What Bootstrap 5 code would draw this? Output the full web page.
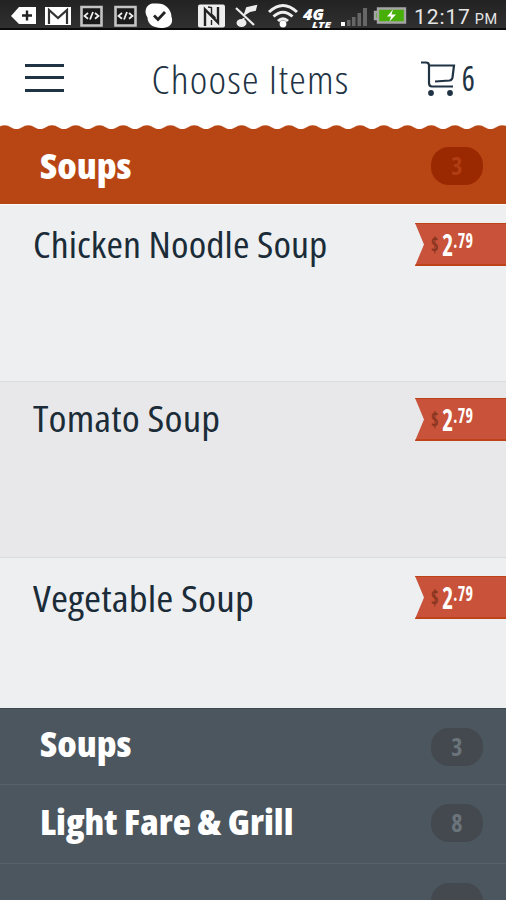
<!DOCTYPE html>
<html lang="en">
<head>
<meta charset="utf-8">
<meta name="viewport" content="width=device-width, initial-scale=1">
<title>Choose Items</title>
<link href="https://cdn.jsdelivr.net/npm/bootstrap@5.3.0/dist/css/bootstrap.min.css" rel="stylesheet">
<style>
body{font-family:"Open Sans","Noto Sans",sans-serif;font-stretch:75%;background:#4c565e;color:#1b2c38}
.screen{width:506px;height:900px;background:#4c565e}
.status-bar{height:30px;background:linear-gradient(#222,#303030);border-bottom:2px solid #0b0b0b;font-family:Roboto,sans-serif;font-stretch:100%;color:#e6e6e6}
.clock{font-size:21px;line-height:28px;letter-spacing:.9px;margin-left:4px;padding-top:3px}
.clock small{font-size:14.5px;letter-spacing:.5px;margin-left:4px}
.top-bar{height:95px;background:#fff;color:#1f3344;padding:0 31px 0 25px}
.menu-lines{width:39px;height:28px}
.menu-lines i{height:3px;background:#1f3344}
.page-title{font-size:38.5px;font-weight:350;letter-spacing:1.1px;line-height:48px;transform:scaleX(1.09);padding:2px 0 0 16px}
.cart-count{font-size:35px;line-height:40px;transform:scaleX(.88);transform-origin:right;margin-left:-2px}
.scallop{height:4px;background:#fff}
.section-bar{color:#fff;padding:0 23px 0 40px;font-size:36px;font-weight:800;line-height:44px}
.section-bar.active{height:75px;background:#b84614}
.section-bar.idle{height:79px;border-bottom:1px solid #566169}
.section-bar.first{height:77px;border-top:1px solid #3d494f}
.section-name{padding-top:15px;transform:scaleX(1.05);transform-origin:left}
.long-name{transform:scaleX(1.037)}
.first .section-name{padding-top:13px}
.count-pill{width:52px;height:38px;border-radius:18px;font-size:24px;line-height:38px;font-weight:700;background:#43494e;color:#6b747b;margin-top:19px}
.active .count-pill{background:#9a2800;color:#b03d14;margin-top:18px}
.item-list{border-top:1px solid #fafafa}
.menu-item{height:177px;background:#edeff1;border-bottom:1px solid #d9dbdd;padding-left:33px;font-size:36px;font-weight:500;line-height:42px}
.menu-item.alt{height:176px;background:#e8e8ea}
.menu-item:last-child{height:150px;border:0}
.item-name{padding-top:19px;letter-spacing:.1px;transform:scaleX(1.105);transform-origin:left}
.alt .item-name{padding-top:16px;transform:scaleX(1.137)}
.menu-item:last-child .item-name{padding-top:20px;transform:scaleX(1.143)}
.ribbon{width:91px;height:43px;margin-top:18px;background:#c9523a;border-top:1px solid #bf4318;border-bottom:2px solid #bf4318;clip-path:polygon(0 0,100% 0,100% 100%,0 100%,9px 50%);padding-left:16px;color:#fff}
.alt .ribbon{margin-top:16px}
.menu-item:last-child .ribbon{margin-top:18px}
.price{font-weight:700;font-size:31px;line-height:40px;transform:scaleX(.76);transform-origin:left;white-space:nowrap}
.price .cur{font-size:21px;color:#8a3520;margin-right:5px}
.price .cents{font-size:21px;line-height:32px;letter-spacing:.4px}
</style>
<script src="https://cdn.jsdelivr.net/npm/bootstrap@5.3.0/dist/js/bootstrap.bundle.min.js"></script>
</head>
<body>
<main class="screen overflow-hidden">
  <div class="status-bar d-flex">
    <svg width="410" height="30" viewBox="0 0 410 30" class="flex-shrink-0">
      <path d="M11 16l8-9h17v17H19z" fill="#fff"/><path d="M27 10.500v10M22 15.500h10" stroke="#222" stroke-width="2.400"/>
      <path d="M45 7h26v18H45z" fill="#fff"/><path d="M49 24V10l9 8 9-8v14" fill="none" stroke="#333" stroke-width="2.200"/>
      <g id="code"><path d="M81.500 7h20v18.500h-20z" fill="#1a1a1a" stroke="#c4c4c4" stroke-width="2.600"/><path d="M88 13l-3.500 2.900 3.500 2.900M95 13l3.500 2.900-3.500 2.900M93 12l-3 7.500" fill="none" stroke="#eee" stroke-width="1.800"/></g>
      <use href="#code" x="34"/>
      <path d="M146 9c1-4 5-6 9-5.500 5-.5 9 .5 12 3.500 3 3 4.500 6 4.500 10 2 5-1 10-6 10.500-4 1-7 .5-10-.5-5-1-8-5-8-9.500-2-3-2.500-6-1.500-8.500z" fill="#fff"/><path d="M154 15.500l4 4 7-7.500" fill="none" stroke="#222" stroke-width="2.800"/>
      <rect x="198" y="4.500" width="27" height="23" rx="2" fill="#eee"/><path d="M205 26V9.500l13 13V7" fill="none" stroke="#222" stroke-width="2.400"/><path d="M208 7l3.500.5v6.500l4 4M211.500 25v-5" fill="none" stroke="#222" stroke-width="1.400"/>
      <ellipse cx="241.500" cy="23" rx="5" ry="4" fill="#eee"/><path d="M236 8l18 17" fill="none" stroke="#eee" stroke-width="2.200"/><path d="M243.500 23V18M245 14l2-6 9-2-1 4-5 1z" fill="#eee" stroke="#eee" stroke-width="2"/>
      <path d="M269 12q14-13 28 0M273.500 16.500q9.500-8.500 19 0M278 21q5-4.500 10 0" fill="none" stroke="#eee" stroke-width="3"/><circle cx="283" cy="24" r="3.400" fill="#fff"/>
      <g fill="#fff" font-family="Open Sans, sans-serif" font-style="italic" font-weight="800"><text x="303" y="20" font-size="15" textLength="21" lengthAdjust="spacingAndGlyphs">4G</text><text x="312" y="27.500" font-size="8.500" textLength="19" lengthAdjust="spacingAndGlyphs">LTE</text></g>
      <path d="M341 22h4v4h-4z" fill="#fff"/><path d="M347 20h3.500v6H347zM352 17h3.500v9H352zM357.500 13h3.500v13h-3.500zM363 8h4v18h-4z" fill="#666"/>
      <path d="M378 8.500h27v14h-27zM378 12h-3v7h3" fill="#48ae08" stroke="#a5a5a5" stroke-width="2.400"/><path d="M393 9.500l-6 7h4l-1.500 5 6.500-7h-4.500z" fill="#fff"/>
    </svg>
    <div class="clock text-nowrap">12:17<small>PM</small></div>
  </div>

  <header class="top-bar d-flex align-items-center justify-content-between">
    <div class="menu-lines d-flex flex-column justify-content-between"><i></i><i></i><i></i></div>
    <h1 class="page-title m-0 text-nowrap">Choose Items</h1>
    <div class="d-flex align-items-center">
      <svg width="42" height="36" viewBox="0 0 42 36" fill="none" stroke="#1f3344" stroke-width="2.200"><path d="M1 2.500h5q3 0 3 3V23q0 3.500 3 3.500h21M9 5.500h25l-1.500 12q-.5 2.500-3 3L15 21.500"/><g fill="#1f3344" stroke="none"><circle cx="11" cy="33" r="2.900"/><circle cx="30" cy="33" r="2.900"/></g></svg>
      <span class="cart-count">6</span>
    </div>
  </header>

  <svg class="scallop d-block" width="506" height="4">
    <defs><pattern id="wave" x="-7.200" width="23.700" height="4" patternUnits="userSpaceOnUse"><path d="M0 4C5 4 6.500.2 11.850.2S18.700 4 23.700 4z" fill="#b84614"/></pattern></defs>
    <rect width="506" height="4" fill="url(#wave)"/>
  </svg>
  <div class="section-bar active d-flex justify-content-between">
    <span class="section-name">Soups</span><span class="count-pill text-center">3</span>
  </div>

  <section class="item-list">
    <div class="menu-item d-flex justify-content-between"><span class="item-name">Chicken Noodle Soup</span>
      <div class="ribbon"><div class="price d-flex"><span class="cur">$</span><span>2</span><span class="cents">.79</span></div></div></div>
    <div class="menu-item alt d-flex justify-content-between"><span class="item-name">Tomato Soup</span>
      <div class="ribbon"><div class="price d-flex"><span class="cur">$</span><span>2</span><span class="cents">.79</span></div></div></div>
    <div class="menu-item d-flex justify-content-between"><span class="item-name">Vegetable Soup</span>
      <div class="ribbon"><div class="price d-flex"><span class="cur">$</span><span>2</span><span class="cents">.79</span></div></div></div>
  </section>

  <div class="section-bar idle first d-flex justify-content-between"><span class="section-name">Soups</span><span class="count-pill text-center">3</span></div>
  <div class="section-bar idle d-flex justify-content-between"><span class="section-name long-name">Light Fare &amp; Grill</span><span class="count-pill text-center">8</span></div>
  <div class="section-bar idle d-flex justify-content-end"><span class="count-pill"></span></div>
</main>
</body>
</html>
